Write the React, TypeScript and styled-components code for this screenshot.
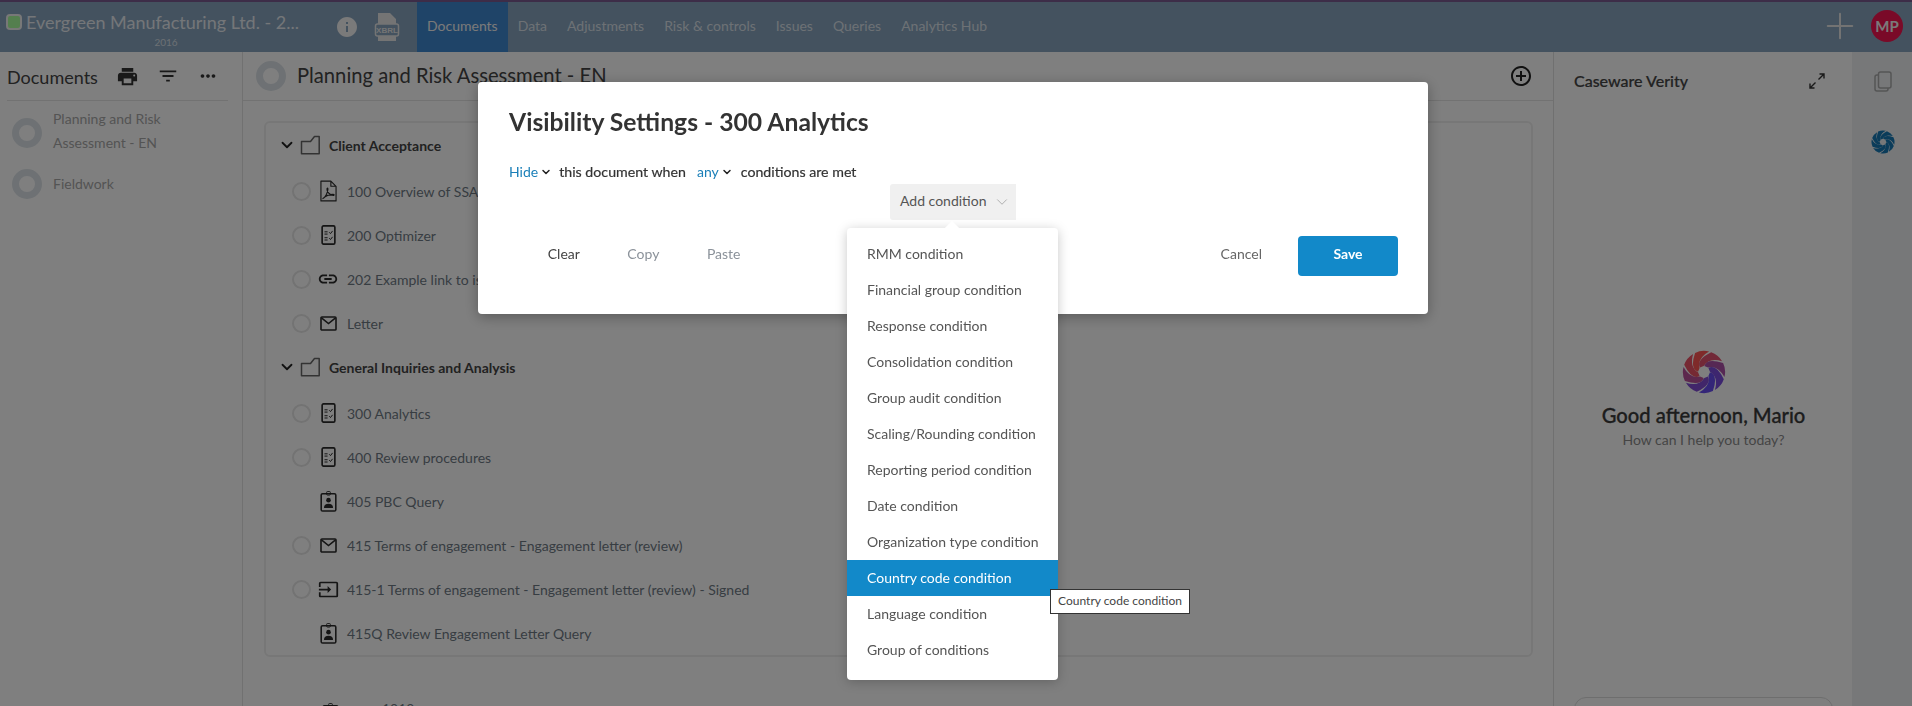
import React from "react";
import styled, { createGlobalStyle } from "styled-components";
import { ChevronDown, Plus } from "lucide-react";
import { MdInfo, MdPrint, MdFilterList, MdMoreHoriz, MdAddCircleOutline, MdLink, MdInput } from "react-icons/md";

const Global = createGlobalStyle`
  html, body { margin: 0; padding: 0; height: 100%; background: #fff; }
  body { font-family: "Lato", "Open Sans", sans-serif; font-size: 14px; color: #444; overflow: hidden; }
  * { box-sizing: border-box; }
`;

const Page = styled.div`
  height: 100vh; display: flex; flex-direction: column; overflow: hidden; background: #fff;
`;
const Header = styled.header`
  height: 52px; flex: none; display: flex; align-items: stretch;
  background: #88a4be; border-top: 2px solid #7a5a90; color: #fff;
`;
const TitleBlock = styled.div`
  width: 329px; padding: 7px 0 0 6px; display: flex; flex-direction: column;
`;
const TitleLine = styled.div`
  display: flex; align-items: center; gap: 4px; font-size: 18px; line-height: 26px; color: #e8edf2; white-space: nowrap;
`;
const StatusSquare = styled.span`
  width: 16px; height: 16px; border-radius: 4px; background: #a8ff9c; border: 2px solid #f0f0f0; flex: none;
`;
const Year = styled.div`
  width: 320px; text-align: center; font-size: 10px; line-height: 12px; margin-top: 1px; color: #d8e0e8;
`;
const HeadIcons = styled.div`
  width: 88px; display: flex; align-items: center; gap: 15px; padding-left: 6px; color: #f4f4f4;
`;
const Nav = styled.nav`
  display: flex; align-items: stretch; flex: 1;
`;
const NavItem = styled.a<{ $active?: boolean }>`
  display: flex; align-items: center; font-size: 14px; padding: 0 10px 3px;
  background: ${p => (p.$active ? "#3e88d0" : "transparent")};
  color: ${p => (p.$active ? "#f4f4f4" : "#dbe3ea")};
`;
const HeadRight = styled.div`
  display: flex; align-items: center; gap: 10px; padding: 0 9px 3px 0; color: #e6e6e6;
`;
const Avatar = styled.div`
  width: 32px; height: 32px; border-radius: 50%; background: #f41450; color: #f4f4f4;
  display: flex; align-items: center; justify-content: center; font-weight: 700; font-size: 15px;
`;
const Body = styled.div`
  flex: 1; display: flex; min-height: 0;
`;
const Sidebar = styled.aside`
  width: 243px; flex: none; border-right: 1px solid #e2e2e2; padding-right: 14px;
`;
const SideHead = styled.div`
  height: 49px; margin-left: 7px; border-bottom: 1px solid #e4e4e4; display: flex; align-items: center; color: #3c3c3c;
`;
const SideTitle = styled.h2`
  font-size: 18px; font-weight: 400; margin: 0; width: 109px; color: #444; padding-top: 2px;
`;
const SideTools = styled.div`
  display: flex; align-items: center; gap: 18px; color: #333;
`;
const SideList = styled.div`
  padding: 5px 0 0 12px; display: flex; flex-direction: column; gap: 4px;
`;
const SideItem = styled.div`
  display: flex; align-items: center; gap: 11px; min-height: 40px; color: #a8a8a8; line-height: 24px;
  &:first-child { min-height: 54px; }
`;
const SideLabel = styled.span<{ $lift?: boolean }>`
  padding-bottom: ${p => (p.$lift ? "5px" : "0")};
`;
const BigRing = styled.span`
  width: 30px; height: 30px; border-radius: 50%; border: 7px solid #dde3e8; flex: none;
`;
const Main = styled.main`
  flex: 1; min-width: 0;
`;
const MainHead = styled.div`
  height: 49px; display: flex; align-items: center; border-bottom: 1px solid #e4e4e4;
  padding: 0 20px 1px 13px; gap: 11px;
`;
const MainTitle = styled.h1`
  flex: 1; margin: 0; font-size: 20.2px; font-weight: 400; color: #444; padding-bottom: 2px;
`;
const Card = styled.section`
  margin: 20px 20px 0 21px; border: 2px solid #efefef; border-radius: 6px;
`;
const GroupRow = styled.div`
  height: 46px; padding: 0 0 2px 12px; display: flex; align-items: center; font-weight: 700; color: #444; font-size: 14px;
`;
const FolderWrap = styled.span`
  margin: 0 9px 0 4px; display: flex; color: #666;
`;
const DocRow = styled.div`
  height: 44px; display: flex; align-items: center; padding-left: 26px; color: #6f7a85; font-size: 14px;
`;
const Ring = styled.span<{ $hidden?: boolean }>`
  width: 19px; height: 19px; border-radius: 50%; border: 2.5px solid #e6e6e6; flex: none;
  visibility: ${p => (p.$hidden ? "hidden" : "visible")};
`;
const DocIcon = styled.span`
  width: 22px; height: 24px; margin: 0 8px 0 6px; display: flex; align-items: center; justify-content: center; color: #2a2a2a; flex: none;
`;
const Below = styled.div`
  margin: 29px 0 0 79px; height: 44px; display: flex; align-items: center; gap: 43px; color: #6f7a85;
`;
const BelowIcon = styled.span`
  display: flex; margin-top: 10px; color: #2a2a2a;
`;
const Verity = styled.aside`
  width: 299px; flex: none; border-left: 1px solid #e0e0e0; padding: 0 19px 0 20px;
`;
const VerityHead = styled.div`
  height: 57px; display: flex; align-items: center; justify-content: space-between; padding-right: 8px; color: #333;
`;
const VerityTitle = styled.div`
  font-size: 16px; font-weight: 500; color: #444; -webkit-text-stroke: 0.2px #444;
`;
const Greeting = styled.div`
  margin-top: 241px; display: flex; flex-direction: column; align-items: center;
`;
const GreetingTitle = styled.div`
  font-size: 20.2px; font-weight: 500; color: #3a3a3a; line-height: 24px; margin-top: 9px; white-space: nowrap; -webkit-text-stroke: 0.3px #3a3a3a;
`;
const GreetingSub = styled.div`
  font-size: 14px; line-height: 20px; margin-top: 3px; color: #8a8a8a;
`;
const AskBox = styled.div`
  margin-top: 247px; height: 60px; border: 1.5px solid #dcdcdc; border-radius: 12px;
`;
const Rail = styled.aside`
  width: 60px; flex: none; background: #eef1f3; display: flex; flex-direction: column; align-items: center; gap: 38px; padding: 19px 0 0 2px; color: #aaa;
`;
const Overlay = styled.div`
  position: fixed; inset: 0; background: rgba(0, 0, 0, 0.5); display: flex; justify-content: center; align-items: flex-start; padding: 82px 6px 0 0;
`;
const Modal = styled.div`
  width: 950px; height: 232px; background: #fff; border-radius: 4px; box-shadow: 0 3px 14px rgba(0,0,0,.3); padding: 25px 30px 0;
`;
const ModalTitle = styled.h2`
  margin: 0 0 0 1px; font-size: 24.7px; line-height: 30px; font-weight: 700; color: #333;
`;
const RuleRow = styled.div`
  margin: 25px 0 0 1px; line-height: 20px; display: flex; align-items: center; color: #333; font-size: 14.2px; -webkit-text-stroke: 0.2px #333;
`;
const Pick = styled.span<{ $after: number; $before?: number }>`
  display: inline-flex; align-items: center; gap: 2px; color: #1a7fb8; font-size: 14px; -webkit-text-stroke: 0;
  margin: 0 ${p => p.$after}px 0 ${p => p.$before ?? 0}px;
  svg { color: #222; }
`;
const AddWrap = styled.div`
  margin-top: 2px; display: flex; justify-content: center; position: relative;
`;
const AddButton = styled.div`
  width: 126px; height: 36px; background: #f0f0f0; border-radius: 3px 0 0 3px; display: flex; align-items: center; gap: 7px; padding: 0 0 3px 10px; color: #555; font-size: 14px;
  svg { color: #a8a8a8; margin-top: 3px; }
`;
const Menu = styled.div`
  position: absolute; top: 44px; left: 50%; width: 211px; margin-left: -106px; height: 452px; background: #fff;
  border-radius: 4px; padding: 8px 0 12px; box-shadow: 0 2px 12px rgba(0,0,0,.22);
  &::before {
    content: ""; position: absolute; left: 100px; top: -5px; width: 10px; height: 10px; background: #fff; transform: rotate(45deg);
  }
`;
const MenuItem = styled.div<{ $active?: boolean }>`
  position: relative; height: 36px; line-height: 36px; padding-left: 20px; font-size: 14px;
  color: ${p => (p.$active ? "#fff" : "#555")};
  background: ${p => (p.$active ? "#1289c9" : "transparent")};
`;
const Tooltip = styled.div`
  position: absolute; left: 203px; top: 29px; width: 140px; height: 25px; line-height: 22px; border: 1px solid #333; background: #fff;
  color: #444; font-size: 12px; text-align: center; white-space: nowrap;
`;
const Footer = styled.div`
  margin-top: 16px; height: 40px; display: flex; align-items: center; padding-left: 16px;
`;
const Ghost = styled.span<{ $muted?: boolean }>`
  padding: 0 23.75px 6px; color: ${p => (p.$muted ? "#8b929a" : "#444")}; font-size: 14px;
`;
const Spacer = styled.div`
  flex: 1;
`;
const Cancel = styled.span`
  color: #666; font-size: 14px; padding-bottom: 6px; margin-right: 36px;
`;
const Save = styled.div`
  width: 100px; height: 40px; background: #1289c9; border-radius: 4px; color: #fff; font-weight: 700; font-size: 14px;
  display: flex; align-items: center; justify-content: center; padding-bottom: 6px;
`;

const mix = (a: number[], b: number[], t: number) =>
  `rgb(${a.map((v, i) => Math.round(v + (b[i] - v) * t)).join(",")})`;

const polar = (r: number, deg: number) => {
  const a = (deg * Math.PI) / 180;
  return `${(24 + r * Math.cos(a)).toFixed(2)} ${(24 + r * Math.sin(a)).toFixed(2)}`;
};

// One pinwheel blade: it runs from the inner hole out along a curved gap, and ends on the outer rim.
const blade = (phi: number) => {
  const gap = 3;
  const span = 45 - gap * 2;
  const a = phi + gap;
  const b = phi + gap + span;
  return [
    `M${polar(6.5, a)}`,
    `Q${polar(16, a + 8)} ${polar(23, a + 62)}`,
    `Q${polar(24.5, a + 62 + span / 2)} ${polar(23, b + 62)}`,
    `Q${polar(17, b + 22)} ${polar(6.5, b)}`,
    "Z",
  ].join(" ");
};

const Swirl = ({ size, from, to }: { size: number; from: number[]; to: number[] }) => (
  <svg width={size} height={size} viewBox="0 0 48 48">
    {Array.from({ length: 8 }, (_, i) => {
      const phi = i * 45;
      const rad = ((phi + 50) * Math.PI) / 180;
      const t = 0.5 + 0.5 * (Math.cos(rad) * 0.707 + Math.sin(rad) * 0.707);
      return <path key={i} fill={mix(from, to, t)} d={blade(phi)} />;
    })}
  </svg>
);

const Folder = () => (
  <svg width="20" height="22" viewBox="0 0 20 22" fill="none" stroke="currentColor" strokeWidth="1.5" strokeLinejoin="round">
    <path d="M1.5 7.5h9l4-5h4.7v17.3H1.5z" />
  </svg>
);
const Pdf = () => (
  <svg width="17" height="22" viewBox="0 0 18 23" fill="none" stroke="currentColor" strokeWidth="1.2" strokeLinejoin="round">
    <path d="M1 1h10.5L17 6.5V22H1zM11.5 1v5.5H17" />
    <path d="M3 19.5c2.5-1 5-5.5 5.4-10 .1-1.4-.9-1.5-1-.2-.2 2.4 2.2 6.3 6.6 6.8 1.3 0 1.3-1-.2-1-3.3 0-8 1.800-10.800 4.400z" />
  </svg>
);
const Checklist = () => (
  <svg width="15" height="20" viewBox="0 0 16 22" fill="none" stroke="currentColor">
    <rect x="1" y="1" width="14" height="20" rx="1.5" strokeWidth="1.8" />
    <path d="M3.6 7.5h3.4M3.6 10h3.4M3.6 14h3.4M3.6 16.5h3.4" strokeWidth="1.1" />
    <path d="M8.8 8l1.4 1.5 2.3-3M8.8 14.5l1.4 1.5 2.3-3" strokeWidth="1.1" />
  </svg>
);
const Mail = () => (
  <svg width="17" height="15" viewBox="0 0 18 16" fill="none" stroke="currentColor" strokeWidth="1.7">
    <rect x="1" y="1" width="16" height="14" rx="1" />
    <path d="M1.5 2l7.5 6 7.500-6" />
  </svg>
);
const Badge = () => (
  <svg width="17" height="21" viewBox="0 0 18 23">
    <rect x="1" y="3" width="16" height="19" rx="1.5" fill="none" stroke="currentColor" strokeWidth="1.7" />
    <rect x="7" y="0.5" width="4" height="4" rx="1" fill="none" stroke="currentColor" strokeWidth="1" />
    <circle cx="9" cy="10" r="2.5" fill="currentColor" />
    <path d="M4 18.5c0-3 2-4.5 5-4.5s5 1.500 5 4.500z" fill="currentColor" />
  </svg>
);
const Xbrl = () => (
  <svg width="26" height="30" viewBox="0 0 26 30">
    <path d="M4 1h12l6 6v6H4zM4 23h18v6H4z" fill="#e9e9e9" />
    <rect x="1.5" y="12" width="23" height="12" rx="2" fill="#88a4be" stroke="#e9e9e9" strokeWidth="1.5" />
    <text x="13" y="21" textAnchor="middle" fontSize="8" fontWeight="700" fontFamily="Liberation Sans, sans-serif" fill="#e9e9e9">XBRL</text>
  </svg>
);
const Expand = () => (
  <svg width="16" height="16" viewBox="0 0 16 16" fill="none" stroke="currentColor" strokeWidth="1.4">
    <path d="M9.5 6.5L15 1M10.5 1H15v4.5M6.5 9.5L1 15M1 10.5V15h4.5" />
  </svg>
);
const Pages = () => (
  <svg width="18" height="21" viewBox="0 0 18 21" fill="none" stroke="currentColor" strokeWidth="1.5" strokeLinejoin="round">
    <rect x="4.5" y="1" width="12.5" height="16" rx="2" />
    <path d="M4.5 4H3a2 2 0 0 0-2 2v12a2 2 0 0 0 2 2h9a2 2 0 0 0 2-2v-1" />
  </svg>
);

type Doc = { label: string; icon: React.ReactNode; noRing?: boolean };
const groupOne: Doc[] = [
  { label: "100 Overview of SSAs", icon: <Pdf /> },
  { label: "200 Optimizer", icon: <Checklist /> },
  { label: "202 Example link to issues", icon: <MdLink size={22} /> },
  { label: "Letter", icon: <Mail /> },
];
const groupTwo: Doc[] = [
  { label: "300 Analytics", icon: <Checklist /> },
  { label: "400 Review procedures", icon: <Checklist /> },
  { label: "405 PBC Query", icon: <Badge />, noRing: true },
  { label: "415 Terms of engagement - Engagement letter (review)", icon: <Mail /> },
  { label: "415-1 Terms of engagement - Engagement letter (review) - Signed", icon: <MdInput size={21} /> },
  { label: "415Q Review Engagement Letter Query", icon: <Badge />, noRing: true },
];
const conditions = [
  "RMM condition", "Financial group condition", "Response condition", "Consolidation condition",
  "Group audit condition", "Scaling/Rounding condition", "Reporting period condition", "Date condition",
  "Organization type condition", "Country code condition", "Language condition", "Group of conditions",
];
const navItems = ["Data", "Adjustments", "Risk & controls", "Issues", "Queries", "Analytics Hub"];

const Rows = ({ docs }: { docs: Doc[] }) => (
  <>
    {docs.map(d => (
      <DocRow key={d.label}>
        <Ring $hidden={d.noRing} />
        <DocIcon>{d.icon}</DocIcon>
        {d.label}
      </DocRow>
    ))}
  </>
);

const Group = ({ label }: { label: string }) => (
  <GroupRow>
    <ChevronDown size={18} strokeWidth={2.4} color="#222" />
    <FolderWrap><Folder /></FolderWrap>
    {label}
  </GroupRow>
);

export default function App() {
  return (
    <Page>
      <Global />
      <Header>
        <TitleBlock>
          <TitleLine><StatusSquare />Evergreen Manufacturing Ltd. - 2...</TitleLine>
          <Year>2016</Year>
        </TitleBlock>
        <HeadIcons>
          <MdInfo size={24} />
          <Xbrl />
        </HeadIcons>
        <Nav>
          <NavItem $active>Documents</NavItem>
          {navItems.map(n => <NavItem key={n}>{n}</NavItem>)}
        </Nav>
        <HeadRight>
          <Plus size={42} strokeWidth={1.15} />
          <Avatar>MP</Avatar>
        </HeadRight>
      </Header>
      <Body>
        <Sidebar>
          <SideHead>
            <SideTitle>Documents</SideTitle>
            <SideTools>
              <MdPrint size={23} />
              <MdFilterList size={22} />
              <MdMoreHoriz size={22} />
            </SideTools>
          </SideHead>
          <SideList>
            <SideItem><BigRing /><SideLabel $lift>Planning and Risk<br />Assessment - EN</SideLabel></SideItem>
            <SideItem><BigRing /><SideLabel>Fieldwork</SideLabel></SideItem>
          </SideList>
        </Sidebar>
        <Main>
          <MainHead>
            <BigRing />
            <MainTitle>Planning and Risk Assessment - EN</MainTitle>
            <MdAddCircleOutline size={24} color="#222" />
          </MainHead>
          <Card>
            <Group label="Client Acceptance" />
            <Rows docs={groupOne} />
            <Group label="General Inquiries and Analysis" />
            <Rows docs={groupTwo} />
          </Card>
          <Below><BelowIcon><Badge /></BelowIcon>1010</Below>
        </Main>
        <Verity>
          <VerityHead>
            <VerityTitle>Caseware Verity</VerityTitle>
            <Expand />
          </VerityHead>
          <Greeting>
            <Swirl size={44} from={[255, 84, 84]} to={[104, 76, 240]} />
            <GreetingTitle>Good afternoon, Mario</GreetingTitle>
            <GreetingSub>How can I help you today?</GreetingSub>
          </Greeting>
          <AskBox />
        </Verity>
        <Rail>
          <Pages />
          <Swirl size={24} from={[22, 120, 180]} to={[22, 120, 180]} />
        </Rail>
      </Body>
      <Overlay>
        <Modal>
          <ModalTitle>Visibility Settings - 300 Analytics</ModalTitle>
          <RuleRow>
            <Pick $after={7}>Hide<ChevronDown size={12} strokeWidth={3} /></Pick>
            this document when
            <Pick $after={8} $before={11}>any<ChevronDown size={12} strokeWidth={3} /></Pick>
            conditions are met
          </RuleRow>
          <AddWrap>
            <AddButton>Add condition<ChevronDown size={18} strokeWidth={1.2} /></AddButton>
            <Menu>
              {conditions.map((c, i) => (
                <MenuItem key={c} $active={i === 9}>
                  {c}
                  {i === 9 && <Tooltip>{c}</Tooltip>}
                </MenuItem>
              ))}
            </Menu>
          </AddWrap>
          <Footer>
            <Ghost>Clear</Ghost>
            <Ghost $muted>Copy</Ghost>
            <Ghost $muted>Paste</Ghost>
            <Spacer />
            <Cancel>Cancel</Cancel>
            <Save>Save</Save>
          </Footer>
        </Modal>
      </Overlay>
    </Page>
  );
}
